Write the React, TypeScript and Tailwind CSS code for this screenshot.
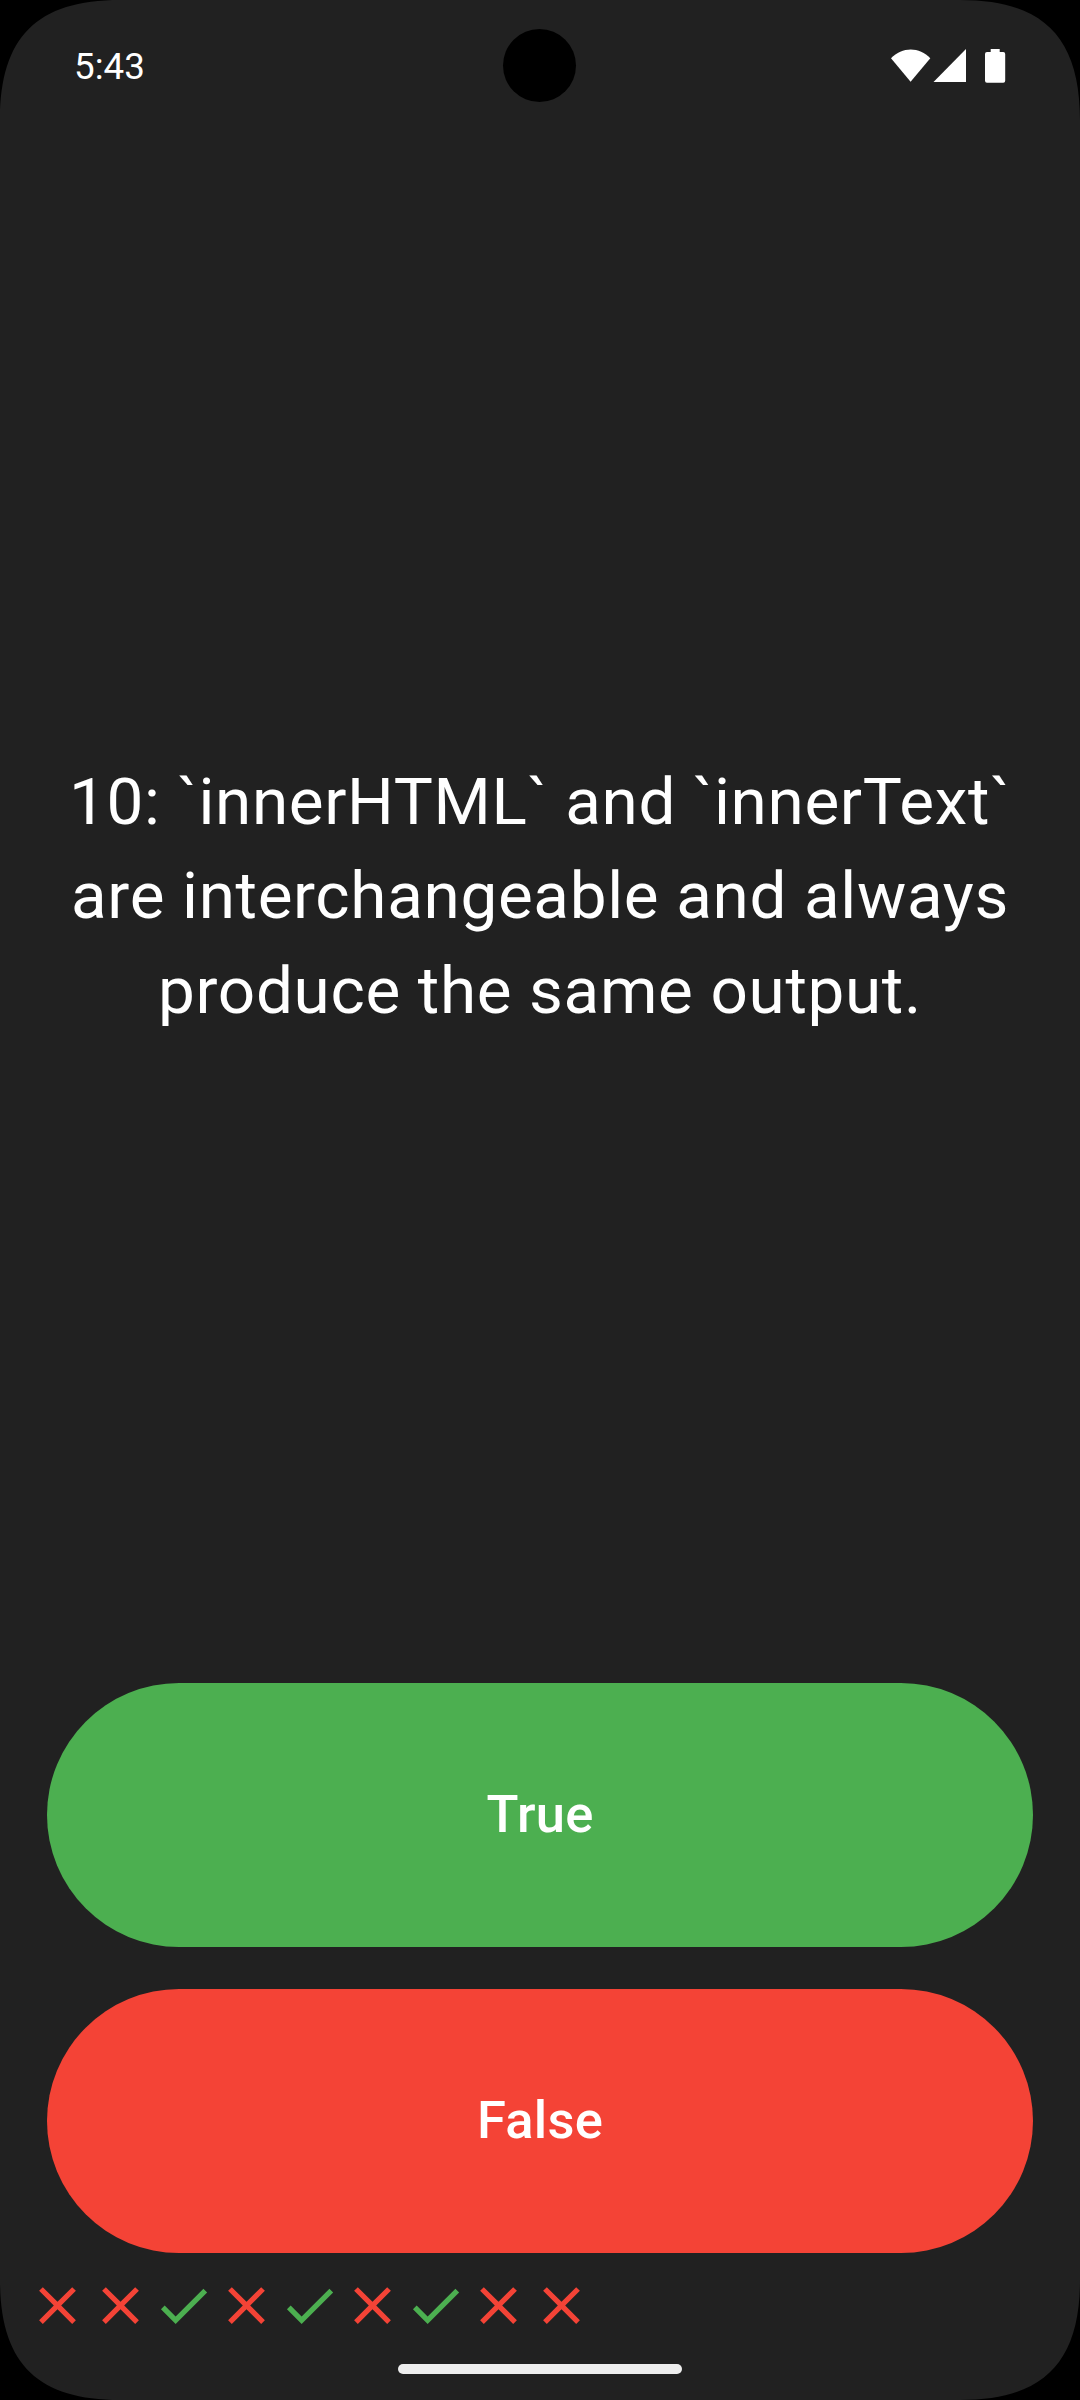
import React from "react";
import { MdCheck, MdClose } from "react-icons/md";

const answers = [false, false, true, false, true, false, true, false, false];

function ScreenCorner({ className }: { className: string }) {
  return (
    <svg className={`absolute size-[120px] ${className}`} viewBox="0 0 120 120" fill="#000">
      <path d="M0 0V120C0 37 37 0 120 0Z" />
    </svg>
  );
}

function StatusBar() {
  return (
    <header className="relative flex h-[132px] shrink-0 items-center justify-between pr-[74px] pl-[74px]">
      <span className="pt-[2px] text-[36.75px] leading-none">5:43</span>
      <div className="absolute top-[29px] left-[503px] size-[73px] rounded-full bg-black" />
      <svg className="h-[36px] w-[116px]" viewBox="0 0 116 36" fill="#fff">
        <path d="M1 10.3C12 -1.600 29.500 -1.600 40.300 10.300L20.600 33.700Z" />
        <path d="M76 1V34H43.500Z" />
        <path d="M100.700 1h9v3h3.500q2 0 2 2V32.700q0 2-2 2H97q-2 0-2-2V6q0-2 2-2h3.700Z" />
      </svg>
    </header>
  );
}

export default function App() {
  return (
    <div className="relative flex h-[2400px] w-[1080px] flex-col overflow-hidden bg-[#212121] font-[Roboto,sans-serif] text-white">
      <StatusBar />
      <main className="flex flex-1 flex-col">
        <div className="flex h-[1525px] items-center justify-center pt-[4px]">
          <p className="text-center text-[65.625px] leading-[94.5px] tracking-[0.65625px]">
            10: `innerHTML` and `innerText`
            <br />
            are interchangeable and always
            <br />
            produce the same output.
          </p>
        </div>
        <div className="mt-[26px] flex flex-col gap-[42px] px-[47px]">
          <button className="h-[264px] rounded-full bg-[#4caf50] pb-[2px] text-[52.5px] font-medium tracking-[0.2625px]">
            True
          </button>
          <button className="h-[264px] rounded-full bg-[#f44336] pb-[2px] text-[52.5px] font-medium tracking-[0.2625px]">
            False
          </button>
        </div>
        <div className="mt-[21px] flex pl-[26.25px]">
          {answers.map((correct, i) =>
            correct ? (
              <MdCheck key={i} className="size-[63px] text-[#4caf50]" />
            ) : (
              <MdClose key={i} className="size-[63px] text-[#f44336]" />
            ),
          )}
        </div>
      </main>
      <footer className="flex h-[36px] shrink-0 justify-center">
        <div className="h-[10px] w-[284px] rounded-full bg-[#eeeeee]" />
      </footer>
      <ScreenCorner className="top-0 left-0" />
      <ScreenCorner className="top-0 right-0 rotate-90" />
      <ScreenCorner className="right-0 bottom-0 rotate-180" />
      <ScreenCorner className="bottom-0 left-0 -rotate-90" />
    </div>
  );
}
